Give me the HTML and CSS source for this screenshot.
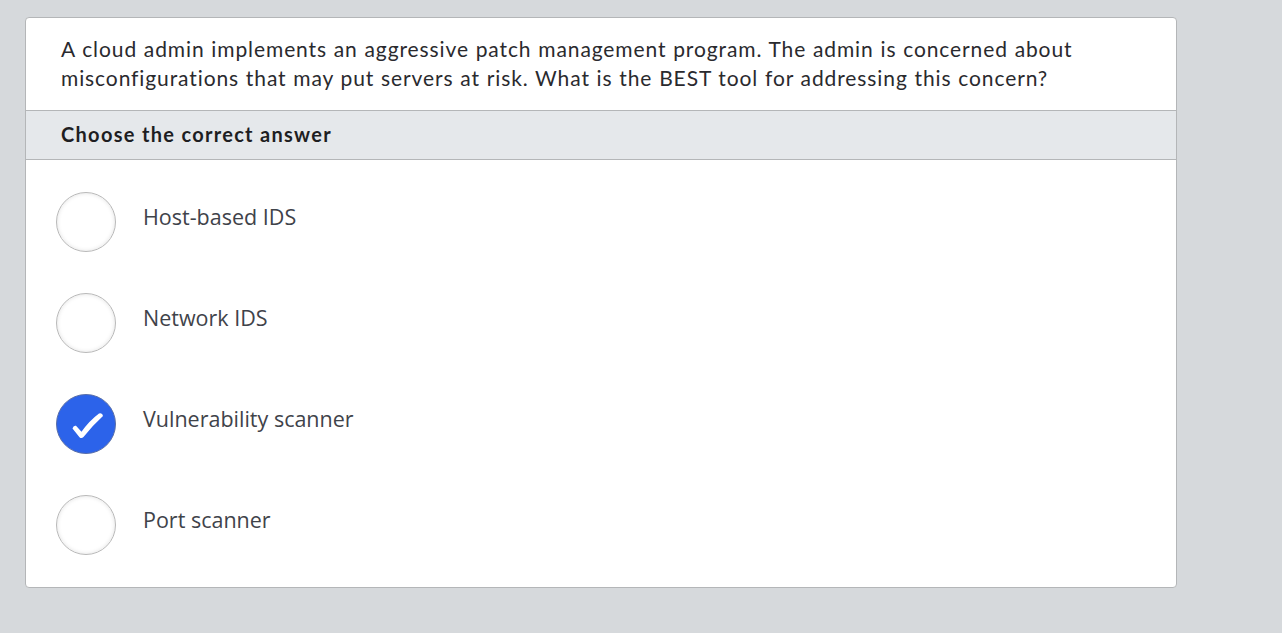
FILE: index.html
```html
<!DOCTYPE html>
<html>
<head>
<meta charset="utf-8">
<link rel="stylesheet" href="styles.css">
</head>
<body>
<div class="card">
  <div class="question">A cloud admin implements an aggressive patch management program. The admin is concerned about misconfigurations that may put servers at risk. What is the BEST tool for addressing this concern?</div>
  <div class="prompt">Choose the correct answer</div>
  <div class="options">
    <div class="option"><span class="radio"></span><span class="label">Host-based IDS</span></div>
    <div class="option"><span class="radio"></span><span class="label">Network IDS</span></div>
    <div class="option"><span class="radio checked"><svg width="60" height="60" viewBox="0 0 60 60"><path d="M16.5 34.5 Q17.5 31 20 31.8 L25.5 37.8 Q33 27 43 19.5 Q46.5 18.5 47 22 Q36 32 27.5 43 Q25.5 45 23.5 43.2 Z" fill="#fff"/></svg></span><span class="label">Vulnerability scanner</span></div>
    <div class="option"><span class="radio"></span><span class="label">Port scanner</span></div>
  </div>
</div>
</body>
</html>
```
FILE: styles.css
```css
html, body {
  margin: 0;
  padding: 0;
  background: #d6d9dc;
}
body {
  padding: 17px 0 0 25px;
}
.card {
  width: 1150px;
  height: 569px;
  background: #fff;
  border: 1px solid #b4b6b8;
  border-radius: 4px;
  overflow: hidden;
}
.question {
  font-family: Lato, "Noto Sans", sans-serif;
  font-size: 21px;
  line-height: 29px;
  color: #2a2a2e;
  padding: 16px 60px 18px 35px;
  letter-spacing: 0.9px;
  word-spacing: 0.5px;
}
.prompt {
  font-family: Lato, "Noto Sans", sans-serif;
  font-weight: bold;
  font-size: 20px;
  color: #1e1e22;
  background: #e5e8eb;
  border-top: 1px solid #b4b6b8;
  border-bottom: 1px solid #b4b6b8;
  height: 48px;
  line-height: 46px;
  padding-left: 35px;
  letter-spacing: 1.3px;
}
.options {
  display: flex;
  flex-direction: column;
  gap: 41px;
  padding: 32px 0 0 30px;
}
.option {
  display: flex;
  align-items: center;
  height: 60px;
}
.radio {
  width: 58px;
  height: 58px;
  border: 1px solid #b9b9b9;
  border-radius: 50%;
  box-shadow: inset 0 0 4px rgba(0,0,0,0.12);
  background: #fff;
  flex: none;
  position: relative;
}
.radio.checked {
  background: #2c63ea;
  border-color: #5a6fa8;
  box-shadow: none;
}
.radio svg {
  position: absolute;
  left: -1px;
  top: -1px;
}
.label {
  font-family: "Open Sans", sans-serif;
  font-size: 21.5px;
  color: #3f434a;
  margin-left: 27px;
  margin-top: -11px;
}
```
